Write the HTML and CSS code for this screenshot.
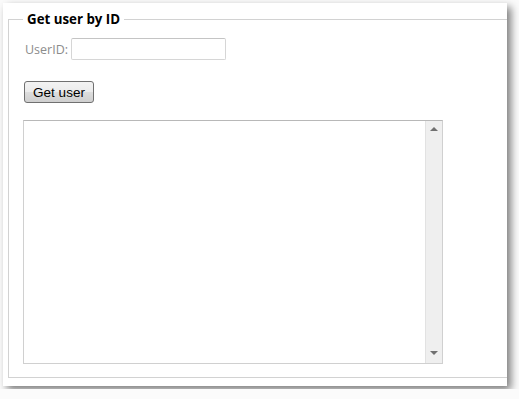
FILE: index.html
```html
<!DOCTYPE html>
<html lang="en">
<head>
    <link rel="stylesheet" href="styles.css">
</head>
<body>
    <div class="panel">
        <fieldset class="box">
            <legend>Get user by ID</legend>
            <div class="row">
                <label for="userId">UserID:</label>
                <input type="text" id="userId">
            </div>
            <button class="btn">Get user</button>
            <div class="output">
                <textarea spellcheck="false"></textarea>
                <div class="scroll">
                    <span class="arrow up"></span>
                    <span class="arrow down"></span>
                </div>
            </div>
        </fieldset>
    </div>
</body>
</html>
```
FILE: styles.css
```css
*{
    box-sizing: border-box;
}
body{
    margin: 0;
    background: #fbfbfb;
    font-family: "Open Sans", "DejaVu Sans", sans-serif;
}
.panel{
    margin: 3px;
    width: 504px;
    height: 383px;
    background: #fff;
    box-shadow: 4px 4px 8px rgba(0,0,0,0.5);
    overflow: hidden;
    padding: 8px 0 0 5px;
}
.box{
    margin: 0;
    width: 530px;
    border: 1px solid #d2d2d2;
    padding: 0 14px 13px;
}
.box legend{
    padding: 0 4px;
    font-size: 13.3px;
    font-weight: bold;
    line-height: 16px;
    color: #000;
}
.row{
    display: flex;
    align-items: center;
    margin-top: 11px;
    height: 22px;
    padding-left: 2px;
}
.row label{
    font-size: 12.5px;
    color: #8c8c8c;
    margin-right: 3px;
}
.row input{
    width: 155px;
    height: 22px;
    border: 1px solid #d6d6d6;
    border-top-color: #c4c4c4;
    border-radius: 2px;
    padding: 2px 4px;
}
.btn{
    display: block;
    margin: 21px 0 0 1px;
    width: 70px;
    height: 22px;
    padding: 0;
    border: 1px solid #707070;
    border-radius: 3px;
    background: linear-gradient(#f3f3f3, #ebebeb 50%, #dddddd 50%, #cfcfcf);
    font-family: "Liberation Sans", Arial, sans-serif;
    font-size: 13.5px;
    color: #000;
}
.output{
    display: flex;
    margin-top: 17px;
    width: 420px;
    height: 244px;
    border: 1px solid #d0d0d0;
    border-top-color: #b8b8b8;
}
.output textarea{
    flex: 1;
    border: none;
    resize: none;
    outline: none;
    padding: 2px;
}
.scroll{
    width: 17px;
    background: #efefef;
    border-left: 1px solid #e2e2e2;
    display: flex;
    flex-direction: column;
    justify-content: space-between;
    align-items: center;
    padding: 6px 0 8px;
}
.arrow{
    width: 0;
    height: 0;
    border-left: 4px solid transparent;
    border-right: 4px solid transparent;
}
.arrow.up{
    border-bottom: 4px solid #707070;
}
.arrow.down{
    border-top: 4px solid #707070;
}
```
